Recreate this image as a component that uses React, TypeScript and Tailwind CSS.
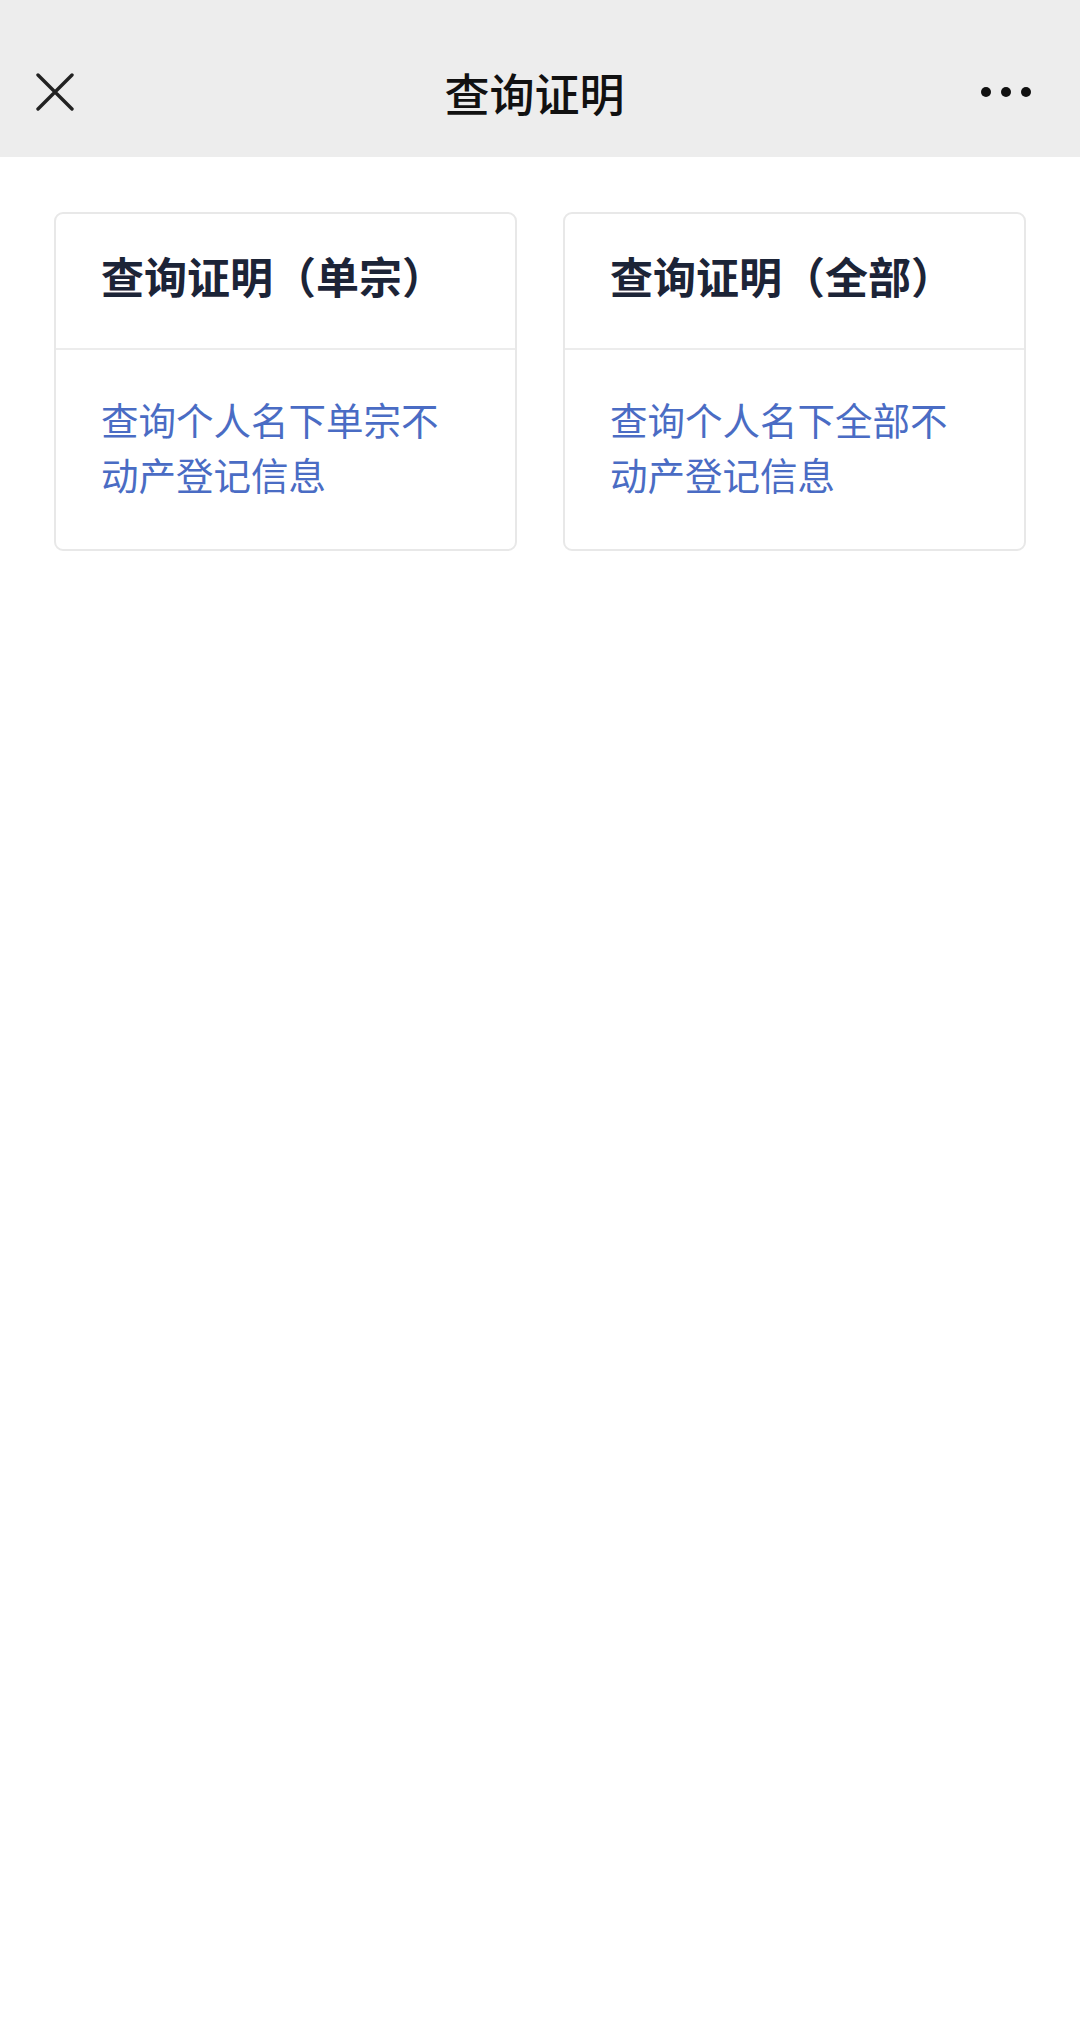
const cards = [
  { title: "查询证明（单宗）", desc: "查询个人名下单宗不动产登记信息" },
  { title: "查询证明（全部）", desc: "查询个人名下全部不动产登记信息" },
];

const App = () => {
  return (
    <div
      className="min-h-[2021px] bg-white"
      style={{ fontFamily: '"Noto Sans CJK SC", "Noto Sans", sans-serif' }}
    >
      {/* Top bar */}
      <div className="h-[157px] bg-[#ededed] flex items-center justify-between px-[36px] pt-[27px]">
        <svg width="38" height="38" viewBox="0 0 38 38" className="text-[#222]">
          <path d="M2 2 L36 36 M36 2 L2 36" stroke="currentColor" strokeWidth="3.4" strokeLinecap="round" />
        </svg>
        <h1 className="text-[45px] text-[#111] font-medium leading-none ml-[14px]">查询证明</h1>
        <div className="flex items-center gap-[10px] pr-[13px]">
          <span className="w-[10px] h-[10px] rounded-full bg-[#111]" />
          <span className="w-[10px] h-[10px] rounded-full bg-[#111]" />
          <span className="w-[10px] h-[10px] rounded-full bg-[#111]" />
        </div>
      </div>

      {/* Cards */}
      <div className="grid grid-cols-2 gap-[46px] px-[54px] pt-[55px]">
        {cards.map((c) => (
          <div key={c.title} className="border-2 border-[#e8e8e8] rounded-[9px] h-[339px] flex flex-col">
            <div className="h-[136px] flex items-center px-[45px] pb-[12px] border-b-2 border-[#ececec]">
              <p className="text-[43px] font-bold text-[#1c2437] leading-none whitespace-nowrap">{c.title}</p>
            </div>
            <div className="flex-1 flex items-center px-[45px] pb-[7px]">
              <p className="text-[37.5px] leading-[55px] text-[#4a6cc4] max-w-[350px]">{c.desc}</p>
            </div>
          </div>
        ))}
      </div>
    </div>
  );
};

export default App;
